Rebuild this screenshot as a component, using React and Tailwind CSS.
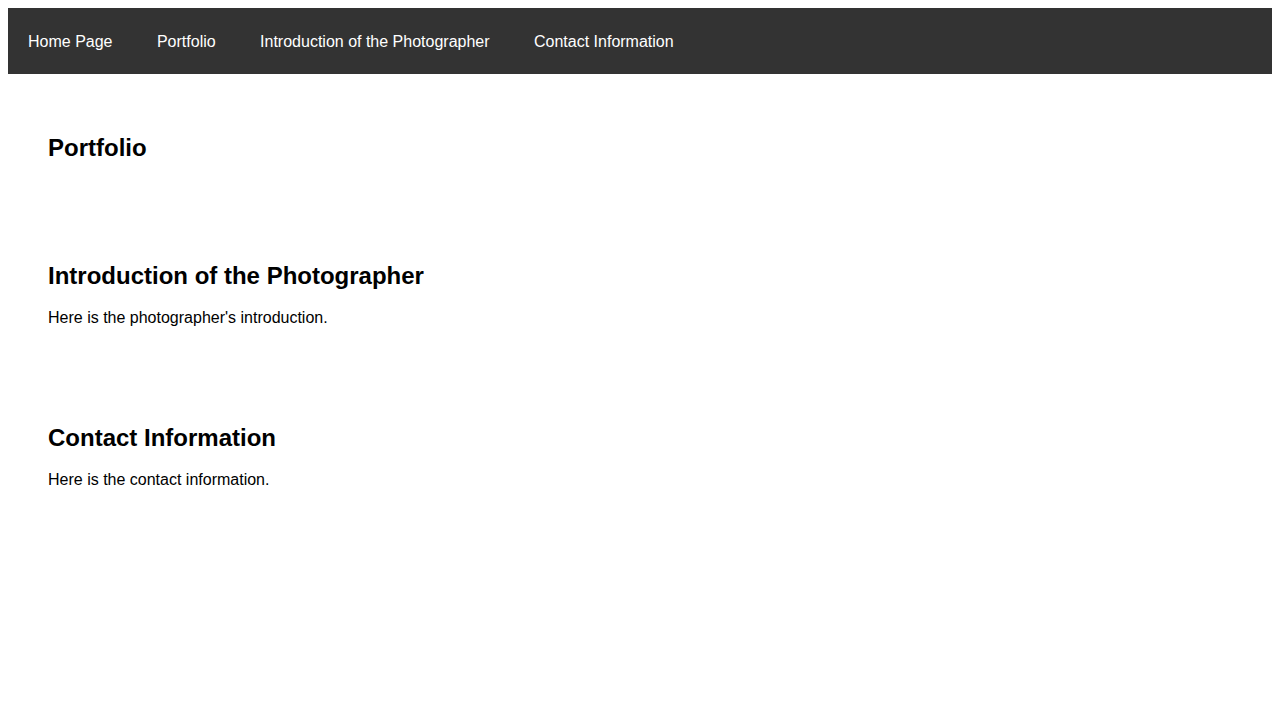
const links = ["Home Page", "Portfolio", "Introduction of the Photographer", "Contact Information"];

const Section = ({ title, text }) => (
  <section className="px-10 py-10">
    <h2 className="text-2xl font-bold leading-[27.6px] mb-5">{title}</h2>
    {text && <p className="text-base leading-[18.4px] mb-4">{text}</p>}
  </section>
);

export default function App() {
  return (
    <div className="m-2 text-black font-['Liberation_Sans',Arial,sans-serif]">
      <nav className="bg-[#333] h-[66px] flex items-start pt-[25px] gap-[4.45px]">
        {links.map((l) => (
          <a key={l} href="#" className="px-5 text-white text-base leading-[18.4px]">
            {l}
          </a>
        ))}
      </nav>
      <main className="flex flex-col pt-5">
        <Section title="Portfolio" />
        <Section title="Introduction of the Photographer" text="Here is the photographer's introduction." />
        <Section title="Contact Information" text="Here is the contact information." />
      </main>
    </div>
  );
}
